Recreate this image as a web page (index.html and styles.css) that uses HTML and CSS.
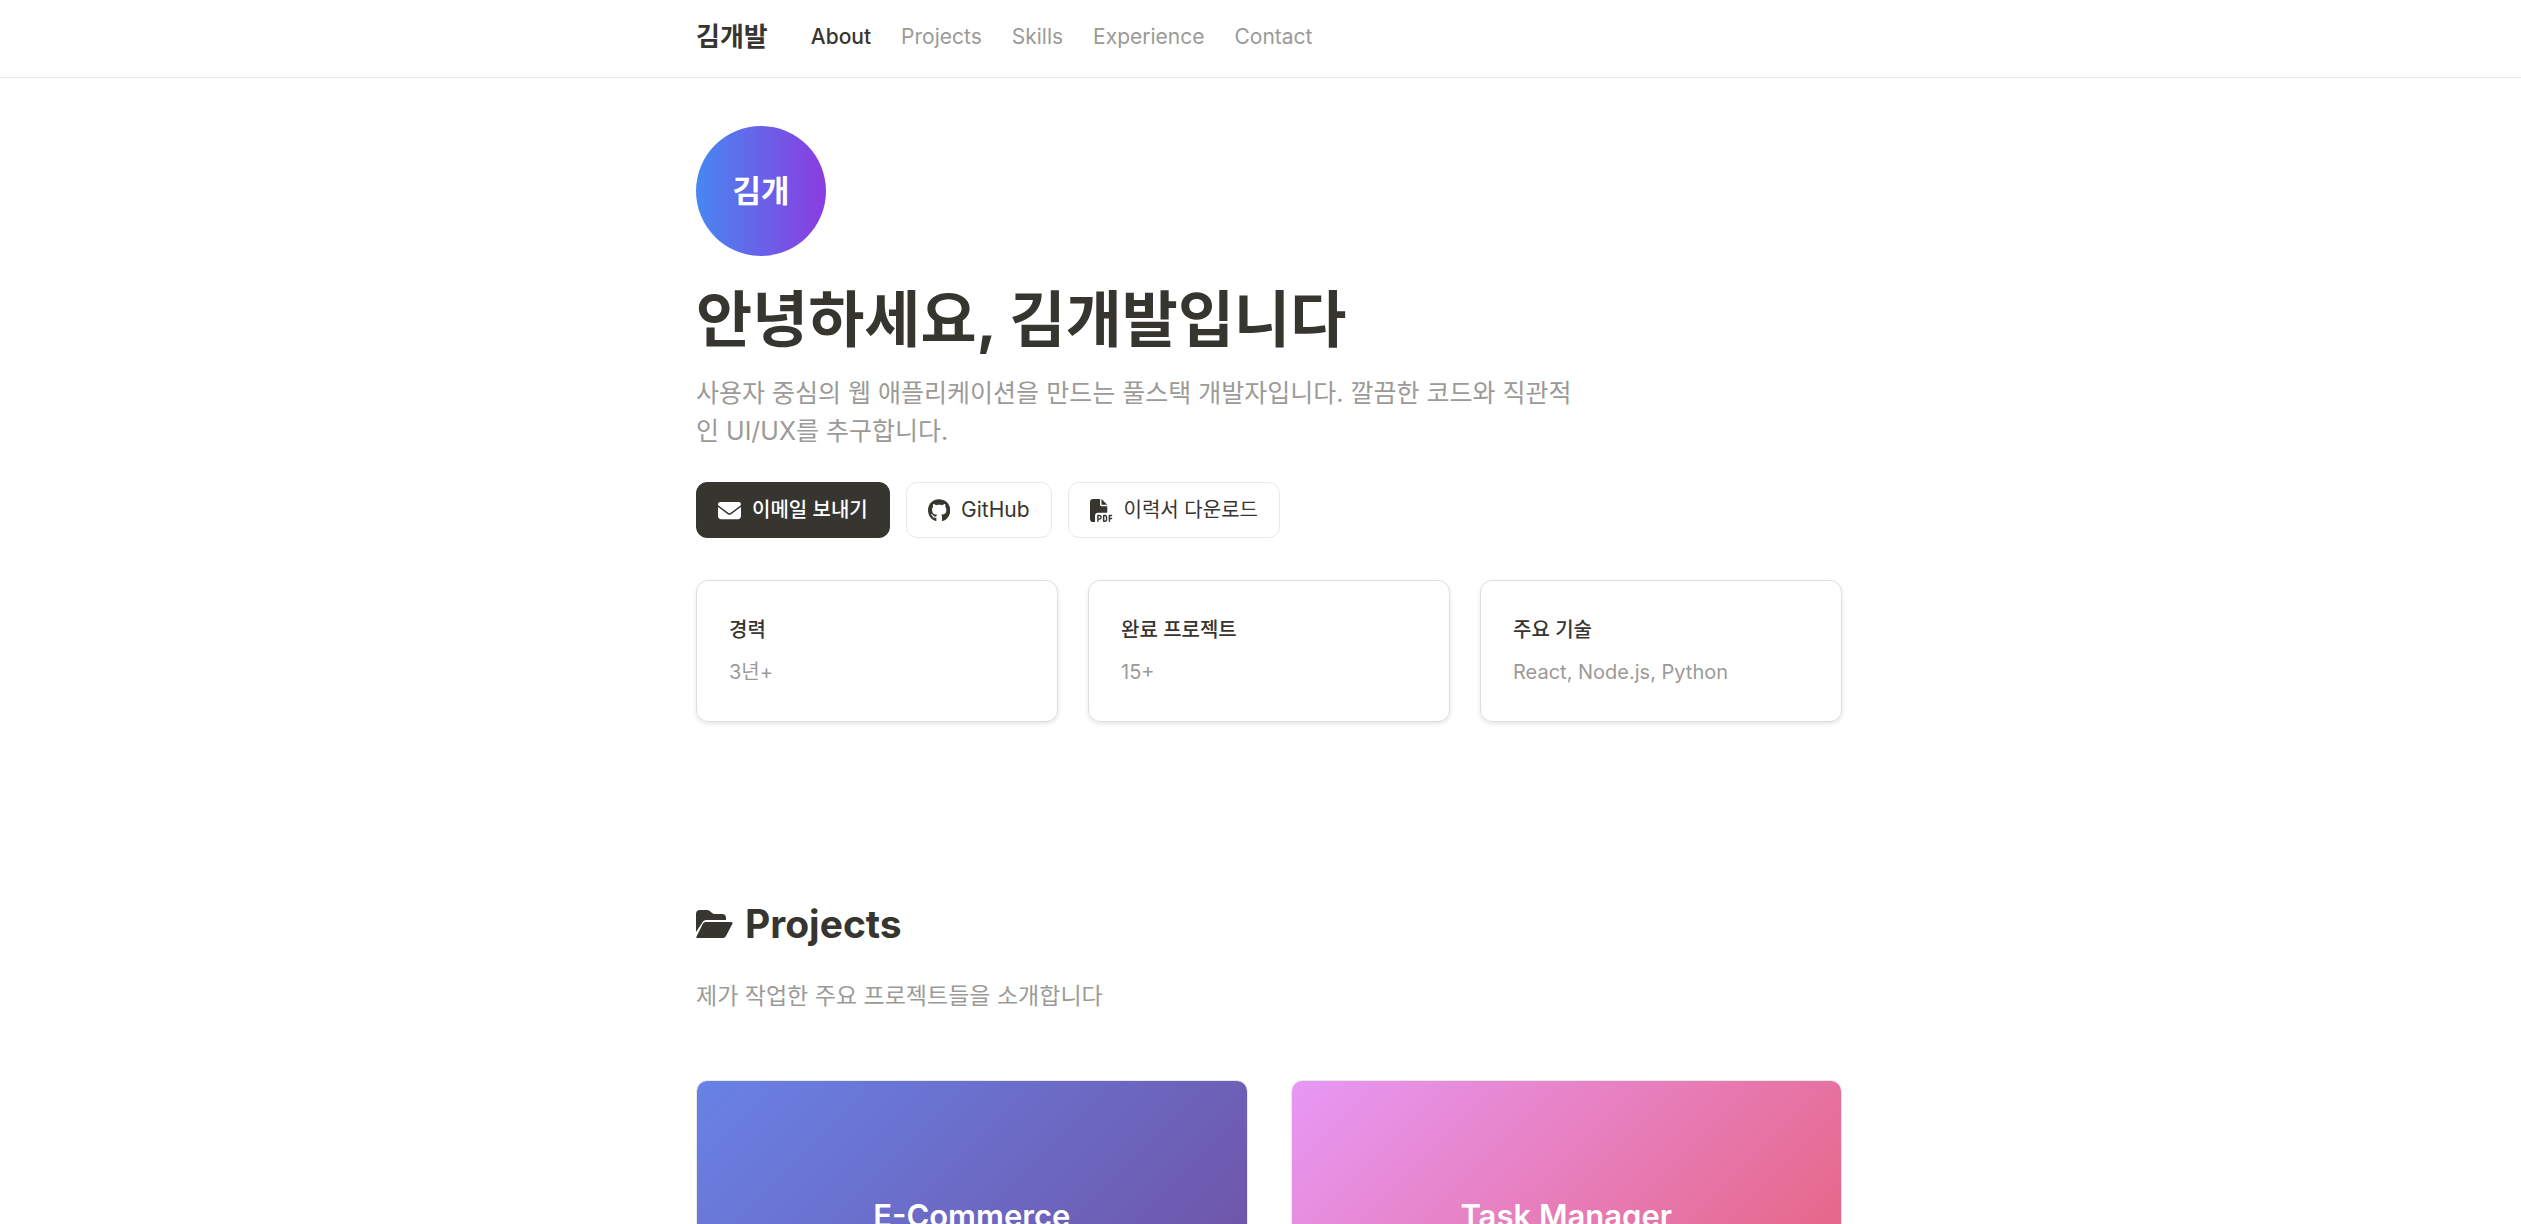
FILE: index.html
```html
<!DOCTYPE html>
<html lang="ko">
<head>
<meta charset="utf-8">
<meta name="viewport" content="width=device-width, initial-scale=1">
<title>김개발</title>
<link rel="stylesheet" href="styles.css">
</head>
<body>
<header class="site-header">
  <div class="container header-row">
    <a class="logo" href="#top">김개발</a>
    <nav class="nav">
      <a class="nav-link active" href="#about">About</a>
      <a class="nav-link" href="#projects">Projects</a>
      <a class="nav-link" href="#skills">Skills</a>
      <a class="nav-link" href="#experience">Experience</a>
      <a class="nav-link" href="#contact">Contact</a>
    </nav>
  </div>
</header>
<main class="container">
  <section id="about" class="hero">
    <div class="avatar">김개</div>
    <h1 class="hero-title">안녕하세요, 김개발입니다</h1>
    <p class="hero-text">사용자 중심의 웹 애플리케이션을 만드는 풀스택 개발자입니다. 깔끔한 코드와 직관적인 UI/UX를 추구합니다.</p>
    <div class="actions">
      <button class="btn btn-primary" type="button">
        <svg class="icon" viewBox="0 0 512 512" aria-hidden="true"><path d="M48 64C21.500 64 0 85.500 0 112c0 15.100 7.100 29.300 19.200 38.400L236.800 313.600c11.400 8.500 27 8.500 38.400 0L492.800 150.400c12.100-9.100 19.200-23.300 19.200-38.400c0-26.500-21.500-48-48-48H48zM0 176V384c0 35.300 28.700 64 64 64H448c35.300 0 64-28.700 64-64V176L294.400 339.200c-22.800 17.100-54 17.100-76.800 0L0 176z"/></svg>
        <span>이메일 보내기</span>
      </button>
      <button class="btn btn-latin" type="button">
        <svg class="icon" viewBox="0 0 496 512" aria-hidden="true"><path d="M165.900 397.400c0 2-2.300 3.600-5.200 3.600-3.300.3-5.600-1.300-5.600-3.600 0-2 2.300-3.600 5.200-3.600 3-.3 5.600 1.300 5.600 3.600zM244.800 8C106.100 8 0 113.300 0 252c0 110.900 69.800 205.800 169.500 239.200 12.800 2.300 17.300-5.600 17.300-12.100 0-6.200-.3-40.400-.3-61.400 0 0-70 15-84.700-29.800 0 0-11.400-29.100-27.800-36.600 0 0-22.900-15.700 1.600-15.400 0 0 24.900 2 38.600 25.800 21.900 38.600 58.600 27.500 72.900 20.900 2.300-16 8.800-27.100 16-33.700-55.900-6.200-112.300-14.300-112.300-110.500 0-27.500 7.600-41.300 23.600-58.900-2.600-6.500-11.100-33.300 2.600-67.900 20.900-6.500 69 27 69 27 20-5.600 41.500-8.500 62.800-8.500s42.800 2.900 62.800 8.500c0 0 48.100-33.600 69-27 13.700 34.700 5.200 61.400 2.600 67.900 16 17.700 25.800 31.500 25.800 58.900 0 96.500-58.900 104.200-114.800 110.500 9.200 7.900 17 22.900 17 46.400 0 33.700-.3 75.400-.3 83.600 0 6.500 4.600 14.400 17.300 12.100C428.200 457.800 496 362.900 496 252 496 113.300 383.500 8 244.800 8z"/></svg>
        <span>GitHub</span>
      </button>
      <button class="btn" type="button">
        <svg class="icon" viewBox="0 0 512 512" aria-hidden="true"><path d="M0 64C0 28.700 28.700 0 64 0H224V128c0 17.700 14.300 32 32 32H384V304H176c-35.300 0-64 28.700-64 64V512H64c-35.300 0-64-28.700-64-64V64zM384 128H256V0L384 128zM176 352h32c30.900 0 56 25.100 56 56s-25.100 56-56 56H192v32c0 8.800-7.200 16-16 16s-16-7.200-16-16V368c0-8.800 7.200-16 16-16zm32 80c13.300 0 24-10.700 24-24s-10.700-24-24-24H192v48h16zm96-80h32c26.500 0 48 21.500 48 48v64c0 26.500-21.500 48-48 48H304c-8.800 0-16-7.200-16-16V368c0-8.800 7.200-16 16-16zm32 128c8.800 0 16-7.200 16-16V400c0-8.800-7.200-16-16-16H320v96h16zm80-112c0-8.800 7.200-16 16-16h48c8.800 0 16 7.200 16 16s-7.200 16-16 16H448v32h32c8.800 0 16 7.200 16 16s-7.200 16-16 16H448v48c0 8.800-7.200 16-16 16s-16-7.200-16-16V368z"/></svg>
        <span>이력서 다운로드</span>
      </button>
    </div>
    <div class="stats">
      <div class="stat"><h3 class="stat-title">경력</h3><p class="stat-text">3년+</p></div>
      <div class="stat"><h3 class="stat-title">완료 프로젝트</h3><p class="stat-text">15+</p></div>
      <div class="stat"><h3 class="stat-title">주요 기술</h3><p class="stat-text">React, Node.js, Python</p></div>
    </div>
  </section>
  <section id="projects">
    <h2 class="section-title">
      <svg class="section-icon" viewBox="0 0 37 28" aria-hidden="true"><path d="M0 22V4Q0 0 4 0H11Q13 0 15 2L16 3Q17 4 19 4H26Q30 4 30 8V10H10Q8 10 7 11.500ZM9.500 12H35Q37.500 12 36 14.500L30 26Q29 28 27 28H1.500Q0 28 .5 26.500L7 13.500Q8 12 9.500 12Z"/></svg>
      <span>Projects</span>
    </h2>
    <p class="section-text">제가 작업한 주요 프로젝트들을 소개합니다</p>
    <div class="projects">
      <article class="project"><div class="cover cover-shop">E-Commerce</div></article>
      <article class="project"><div class="cover cover-tasks">Task Manager</div></article>
    </div>
  </section>
</main>
</body>
</html>
```
FILE: styles.css
```css
* { box-sizing: border-box; margin: 0; padding: 0; }

body {
  background: #fff;
  color: #37352f;
  font-family: Inter, "Noto Sans CJK KR", sans-serif;
  font-size: 20px;
  line-height: 32px;
}

a { color: inherit; text-decoration: none; }

.container { max-width: 1163px; margin: 0 auto; padding-left: 17px; }

.site-header { border-bottom: 1px solid #e9e9e7; }
.header-row { display: flex; align-items: center; gap: 43px; height: 77px; padding-bottom: 4px; }
.logo { font-size: 26px; font-weight: 700; }
.nav { display: flex; gap: 30px; }
.nav-link { font-size: 21px; color: #9b9a97; }
.nav-link.active { color: #37352f; font-weight: 500; }

.hero { padding-top: 48px; }
.avatar {
  display: flex;
  align-items: center;
  justify-content: center;
  width: 130px;
  height: 130px;
  border-radius: 50%;
  background: linear-gradient(to right, #4787f0, #8b3ce0);
  color: #fff;
  font-size: 31px;
  font-weight: 700;
}
.hero-title { margin-top: 24px; font-size: 61px; font-weight: 700; line-height: 80px; }
.hero-text { max-width: 890px; margin-top: 14px; color: #9b9a97; font-size: 25px; line-height: 38px; }

.actions { display: flex; flex-wrap: wrap; gap: 16px; margin-top: 32px; }
.btn {
  display: flex;
  align-items: center;
  gap: 11px;
  height: 56px;
  padding: 0 21px;
  border: 1px solid #e9e9e7;
  border-radius: 11px;
  background: #fff;
  color: #37352f;
  font: inherit;
}
.btn-primary { border-color: #37352f; background: #37352f; color: #fff; font-weight: 500; }
.btn-latin { font-size: 21px; }
.icon { height: 23px; fill: currentColor; }

.stats { display: grid; grid-template-columns: repeat(3, 1fr); gap: 30px; margin-top: 42px; }
.stat {
  padding: 33px 32px;
  border: 1px solid #dededc;
  border-radius: 12px;
  box-shadow: 0 2px 4px rgba(0, 0, 0, 0.1);
}
.stat-title { font-size: 20px; font-weight: 500; }
.stat-text { margin-top: 10px; color: #9b9a97; }

.section-title { display: flex; align-items: center; gap: 12px; margin-top: 178px; font-size: 39px; font-weight: 700; line-height: 48px; }
.section-icon { width: 37px; fill: currentColor; }
.section-text { margin-top: 30px; color: #9b9a97; font-size: 23px; line-height: 36px; }

.projects { display: grid; grid-template-columns: repeat(2, 1fr); gap: 43px; margin-top: 66px; }
.project { overflow: hidden; border: 1px solid #e9e9e7; border-radius: 11px; }
.cover {
  display: flex;
  align-items: center;
  justify-content: center;
  height: 269px;
  color: #fff;
  font-size: 31px;
  font-weight: 600;
}
.cover-shop { background: linear-gradient(135deg, #6882e6, #6f4f9f); }
.cover-tasks { background: linear-gradient(135deg, #e798f6, #e65f75); }
```
